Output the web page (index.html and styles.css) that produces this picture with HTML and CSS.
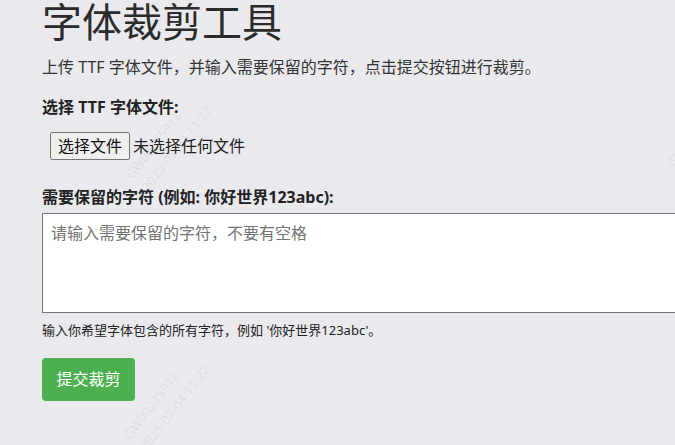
FILE: index.html
```html
<!DOCTYPE html>
<html lang="zh-CN">
<head>
  <meta charset="UTF-8">
  <meta name="viewport" content="width=device-width, initial-scale=1.0">
  <title>字体裁剪工具</title>
  <link rel="stylesheet" href="styles.css">
</head>
<body>
  <div class="page">
    <h1>字体裁剪工具</h1>
    <p class="intro">上传 TTF 字体文件，并输入需要保留的字符，点击提交按钮进行裁剪。</p>
    <form class="crop_form">
      <label class="field_label">选择 TTF 字体文件:</label>
      <div class="file_row">
        <button type="button" class="file_btn">选择文件</button>
        <span class="file_name">未选择任何文件</span>
      </div>
      <label class="field_label chars_label">需要保留的字符 (例如: 你好世界123abc):</label>
      <textarea class="chars" placeholder="请输入需要保留的字符，不要有空格"></textarea>
      <p class="hint">输入你希望字体包含的所有字符，例如 '你好世界123abc'。</p>
      <button type="button" class="submit">提交裁剪</button>
    </form>
  </div>
  <!-- watermark -->
  <div class="wm wm1"><span>GW00275912</span><span>2025-07-04 11:22</span></div>
  <div class="wm wm2"><span>GW00275912</span><span>2025-07-04 11:22</span></div>
  <div class="wm wm3"><span>GW00275912</span><span>2025-07-04 11:22</span></div>
</body>
</html>
```

FILE: styles.css
```css
html, body{  margin: 0;  padding: 0;  }
body{
  background: #eae9ee;  color: #333;  overflow: hidden;
  font-family: "Noto Sans", "Noto Sans CJK SC", sans-serif;
}
.page{  width: 760px;  padding: 0 0 0 42px;  }
h1{  margin: 0;  font-size: 40px;  line-height: 44px;  font-weight: normal;  color: #2b2b2b;  }
.intro{  margin: 11px 0 0;  font-size: 16px;  line-height: 24px;  }
.crop_form{  margin-top: 17px;  }
.field_label{  display: block;  font-size: 16px;  line-height: 22px;  font-weight: bold;  color: #222;  }
.file_row{  display: flex;  align-items: center;  gap: 3px;  margin: 14px 0 0 8px;  font-size: 16px;  }
.file_btn{
  font: inherit;  line-height: 22px;  padding: 2px 7px;  margin: 0;
  border: 1px solid #767676;  border-radius: 2px;  background: #efefef;  color: #111;
}
.file_name{  line-height: 22px;  color: #222;  }
.chars_label{  margin-top: 26px;  }
.chars{
  display: block;  box-sizing: border-box;  width: 100%;  height: 100px;  margin: 5px 0 0;
  padding: 8px;  border: 1px solid #767676;  background: #fff;  resize: none;
  font: 16px/23px "Noto Sans", "Noto Sans CJK SC", sans-serif;
}
.chars::placeholder{  color: #757575;  }
.hint{  margin: 8px 0 0;  font-size: 13px;  line-height: 18px;  color: #222;  }
.submit{
  display: block;  margin-top: 19px;  padding: 10px 14.5px;  border: 0;  border-radius: 4px;
  background: #4caf50;  color: #fff;  font: 16px/23px "Noto Sans", "Noto Sans CJK SC", sans-serif;
}

.wm{
  position: absolute;  display: flex;  flex-direction: column;  gap: 4px;
  transform: rotate(-52deg);  transform-origin: left top;  pointer-events: none;
  font: 13px/16px "Noto Sans", sans-serif;  color: rgba(0,0,0,0.07);  white-space: nowrap;
}
.wm1{  left: 122px;  top: 172px;  }
.wm2{  left: 120px;  top: 432px;  }
.wm3{  left: 664px;  top: 160px;  }
```
